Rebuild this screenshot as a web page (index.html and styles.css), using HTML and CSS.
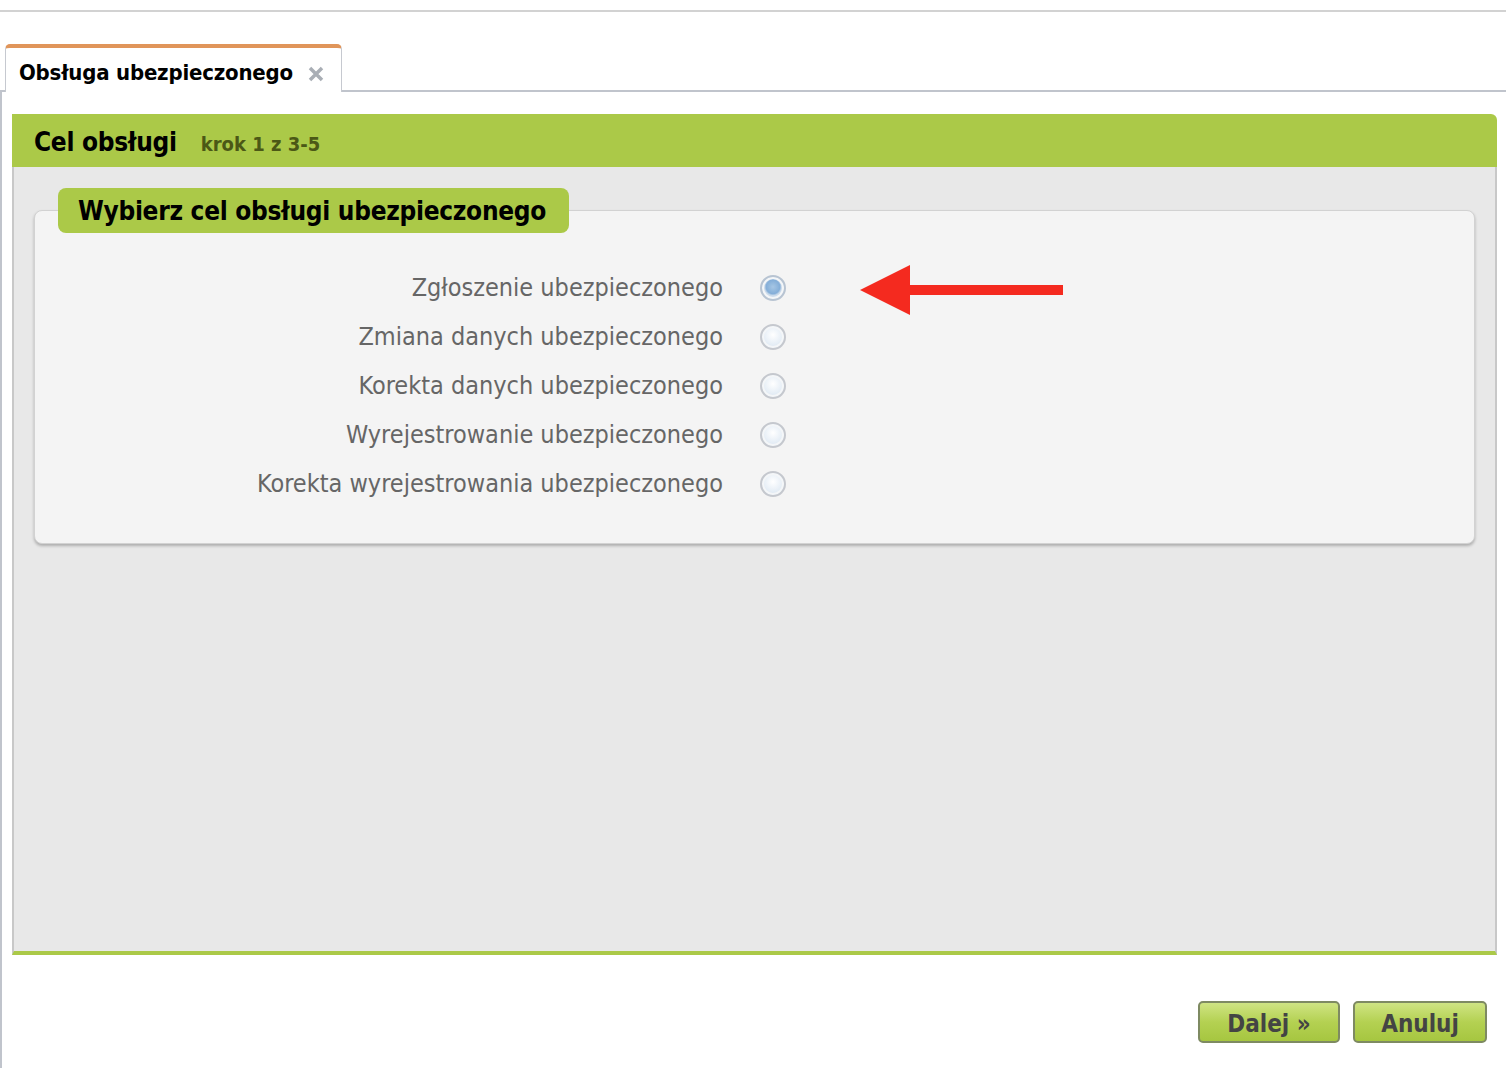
FILE: index.html
```html
<!DOCTYPE html>
<html lang="pl">
<head>
    <meta charset="UTF-8">
    <title>Obsługa ubezpieczonego</title>
    <link rel="stylesheet" href="styles.css">
</head>
<body>
    <div class="topbar"></div>

    <div class="tabs">
        <div class="tab">
            <span class="tab-title">Obsługa ubezpieczonego</span>
            <svg class="tab-close" width="16" height="16" viewBox="0 0 16 16">
                <path d="M2 2 L14 14 M14 2 L2 14" stroke="#a9aeb5" stroke-width="3.5" stroke-linecap="butt"/>
            </svg>
        </div>
    </div>

    <div class="main">
        <div class="panel">
            <div class="panel-header">
                <h1>Cel obsługi</h1>
                <span class="step">krok 1 z 3-5</span>
            </div>
            <div class="panel-body">
                <div class="group">
                    <div class="legend">Wybierz cel obsługi ubezpieczonego</div>
                    <div class="options">
                        <label class="option">
                            <span class="option-label">Zgłoszenie ubezpieczonego</span>
                            <span class="radio checked"></span>
                            <svg class="arrow" width="204" height="50" viewBox="0 0 204 50">
                                <polygon points="0,25 50,0 50,20 203,20 203,30 50,30 50,50" fill="#f42a1f"/>
                            </svg>
                        </label>
                        <label class="option">
                            <span class="option-label">Zmiana danych ubezpieczonego</span>
                            <span class="radio"></span>
                        </label>
                        <label class="option">
                            <span class="option-label">Korekta danych ubezpieczonego</span>
                            <span class="radio"></span>
                        </label>
                        <label class="option">
                            <span class="option-label">Wyrejestrowanie ubezpieczonego</span>
                            <span class="radio"></span>
                        </label>
                        <label class="option">
                            <span class="option-label">Korekta wyrejestrowania ubezpieczonego</span>
                            <span class="radio"></span>
                        </label>
                    </div>
                </div>
            </div>
        </div>

        <div class="actions">
            <button class="btn">Dalej &raquo;</button>
            <button class="btn">Anuluj</button>
        </div>
    </div>
</body>
</html>
```

FILE: styles.css
```css
* {
    margin: 0;
    padding: 0;
    box-sizing: border-box;
}

body {
    font-family: "DejaVu Sans Condensed", "DejaVu Sans", sans-serif;
    background-color: #fff;
    color: #000;
    width: 1506px;
    height: 1068px;
    overflow: hidden;
}

/* Top bar */
.topbar {
    height: 12px;
    border-bottom: 2px solid #d2d2d2;
}

/* Tabs */
.tabs {
    margin-top: 32px;
    height: 48px;
    border-bottom: 2px solid #c0c4cc;
    display: flex;
    align-items: flex-end;
}

.tab {
    margin-left: 5px;
    width: 337px;
    height: 48px;
    margin-bottom: -2px;
    background-color: #fff;
    border: 1px solid #c6c9d0;
    border-bottom: none;
    border-top: 4px solid #e0955a;
    border-radius: 5px 5px 0 0;
    display: flex;
    align-items: center;
    padding: 5px 0 0 13px;
}

.tab-title {
    font-weight: bold;
    font-size: 22px;
    letter-spacing: -0.2px;
}

.tab-close {
    margin-left: 15px;
    margin-top: 3px;
}

/* Main area */
.main {
    border-left: 2px solid #c0c4cc;
    height: 978px;
    padding: 22px 9px 0 10px;
}

.panel-header {
    height: 53px;
    background-color: #abc948;
    border-radius: 0 6px 0 0;
    display: flex;
    align-items: center;
    padding: 2px 0 0 22px;
}

.panel-header h1 {
    font-size: 26px;
    font-weight: bold;
    letter-spacing: -0.3px;
}

.step {
    margin-left: 24px;
    margin-top: 4px;
    font-size: 20px;
    font-weight: bold;
    color: #4b5816;
}

.panel-body {
    height: 788px;
    background-color: #e8e8e8;
    border-left: 2px solid #c8c8c8;
    border-right: 2px solid #c8c8c8;
    border-bottom: 4px solid #abc948;
    padding: 43px 20px 0 20px;
}

/* Option group */
.group {
    background-color: #f4f4f4;
    border: 1px solid #d2d2d2;
    border-radius: 8px;
    box-shadow: 0 2px 3px rgba(0, 0, 0, 0.25);
    height: 334px;
}

.legend {
    width: fit-content;
    margin: -23px 0 0 23px;
    height: 45px;
    padding: 8px 23px 0 20px;
    background-color: #abc948;
    border-radius: 8px;
    font-size: 26px;
    font-weight: bold;
    letter-spacing: -0.3px;
}

.options {
    margin-top: 30px;
}

.option {
    display: flex;
    align-items: center;
    height: 49px;
}

.option-label {
    width: 688px;
    text-align: right;
    font-size: 25px;
    color: #666;
}

.radio {
    margin-left: 37px;
    width: 26px;
    height: 26px;
    border-radius: 50%;
    border: 2px solid #c5c8ce;
    background: radial-gradient(circle at 50% 40%, #ffffff 0%, #e6eef6 55%, #d2dde8 100%);
    box-shadow: inset 0 0 0 2px #f4f6f8;
}

.radio.checked {
    border-color: #b8c4d2;
    background: radial-gradient(circle at 50% 45%, #a6c6e4 0%, #84aed8 42%, #c9d9ea 52%, #eef3f8 100%);
}

.arrow {
    margin-left: 74px;
    margin-top: 4px;
}

/* Buttons */
.actions {
    display: flex;
    justify-content: flex-end;
    gap: 13px;
    margin-top: 46px;
    padding-right: 10px;
}

.btn {
    height: 42px;
    min-width: 134px;
    padding: 4px 24px 0 24px;
    font-family: inherit;
    font-size: 24px;
    font-weight: bold;
    color: #444;
    background: linear-gradient(#cfe483, #b4d152 50%, #a6c640);
    border: 2px solid #7e8a62;
    border-radius: 5px;
    cursor: pointer;
}

.btn:first-child {
    width: 142px;
}
```
